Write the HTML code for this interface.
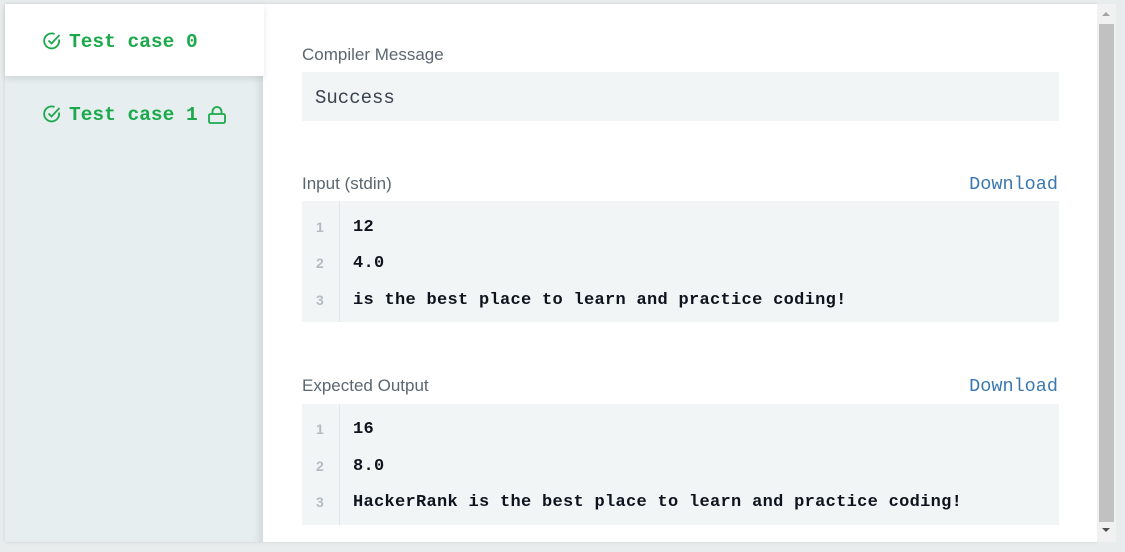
<!DOCTYPE html>
<html><head><style>
body{margin:0;width:1125px;height:552px;background:#e9ecec;position:relative;overflow:hidden;font-family:"Liberation Sans",sans-serif}
.panel{position:absolute;left:5px;top:4px;width:1092px;height:538px;background:#fff;box-shadow:0 0 3px rgba(0,0,0,.12)}
.side{position:absolute;left:0;top:0;width:258px;height:538px;background:#e7eeef;box-shadow:inset -8px 0 10px -6px rgba(0,0,0,.12)}
.tab{position:absolute;left:0;width:258px;height:72px;font-family:"Liberation Mono",monospace;font-weight:bold;font-size:19.5px;color:#1ba94c}
.tab.a{background:#fff;top:0;width:259px;box-shadow:0 3px 6px rgba(0,0,0,.1)}
.tab span{position:absolute;left:64px;top:27px}
.tab svg{position:absolute}
.lbl{position:absolute;left:297px;font-size:17px;color:#5b6670}
.dl{position:absolute;right:39px;font-family:"Liberation Mono",monospace;font-size:18.5px;color:#3b78b0}
.box{position:absolute;left:297px;width:757px;background:#f2f5f6}
.ln{position:absolute;left:0;top:0;bottom:0;width:37px;border-right:1px solid #e2e7e9}
.row{position:absolute;left:0;font-family:"Liberation Mono",monospace;font-size:17px;font-weight:bold;color:#0e141e;letter-spacing:.3px;white-space:pre}
.row b{position:absolute;left:14px;width:10px;color:#b2bcc2;font-family:"Liberation Sans",sans-serif;font-size:14px;top:1px}
.row i{font-style:normal;position:absolute;left:51px}
.sb{position:absolute;left:1092px;top:0;width:19px;height:538px;background:#f1f1f1}
.th{position:absolute;left:2px;top:20px;width:15px;height:498px;background:#c1c1c1}
</style></head><body>
<div class="panel">
<div class="side">
<div class="tab a"><svg style="left:37px;top:27px" width="20" height="20" viewBox="0 0 20 20" fill="none" stroke="#1ba94c" stroke-width="1.8"><path d="M17 8.5A7.5 7.5 0 1 1 12.5 3"/><path d="M6.5 9.5l3 3L17.5 4"/></svg><span>Test case 0</span></div>
<div class="tab" style="top:72px"><svg style="left:37px;top:28px" width="20" height="20" viewBox="0 0 20 20" fill="none" stroke="#1ba94c" stroke-width="1.8"><path d="M17 8.5A7.5 7.5 0 1 1 12.5 3"/><path d="M6.5 9.5l3 3L17.5 4"/></svg><span style="top:28px">Test case 1</span><svg style="left:202px;top:29px" width="20" height="20" viewBox="0 0 20 20" fill="none" stroke="#1ba94c" stroke-width="1.8"><rect x="2" y="9" width="16" height="9" rx="1.5"/><path d="M5.5 9V6.5a4.5 4.5 0 0 1 9 0V9"/></svg></div>
</div>
<div class="lbl" style="top:41px">Compiler Message</div>
<div class="box" style="top:68px;height:49px"><div style="position:absolute;left:13px;top:15px;font-family:'Liberation Mono',monospace;font-size:19px;color:#39424e">Success</div></div>
<div class="lbl" style="top:170px">Input (stdin)</div>
<div class="dl" style="top:170px">Download</div>
<div class="box" style="top:197px;height:121px"><div class="ln"></div>
<div class="row" style="top:17px"><b>1</b><i>12</i></div>
<div class="row" style="top:53px"><b>2</b><i>4.0</i></div>
<div class="row" style="top:90px"><b>3</b><i>is the best place to learn and practice coding!</i></div>
</div>
<div class="lbl" style="top:372px">Expected Output</div>
<div class="dl" style="top:372px">Download</div>
<div class="box" style="top:400px;height:121px"><div class="ln"></div>
<div class="row" style="top:16px"><b>1</b><i>16</i></div>
<div class="row" style="top:53px"><b>2</b><i>8.0</i></div>
<div class="row" style="top:89px"><b>3</b><i>HackerRank is the best place to learn and practice coding!</i></div>
</div>
<div class="sb"><div style="position:absolute;left:5px;top:8px;border:4px solid transparent;border-bottom:4px solid #a3a3a3;border-top:0"></div><div class="th"></div><div style="position:absolute;left:5px;top:524px;border:4px solid transparent;border-top:4px solid #505050;border-bottom:0"></div></div>
</div>
</body></html>
